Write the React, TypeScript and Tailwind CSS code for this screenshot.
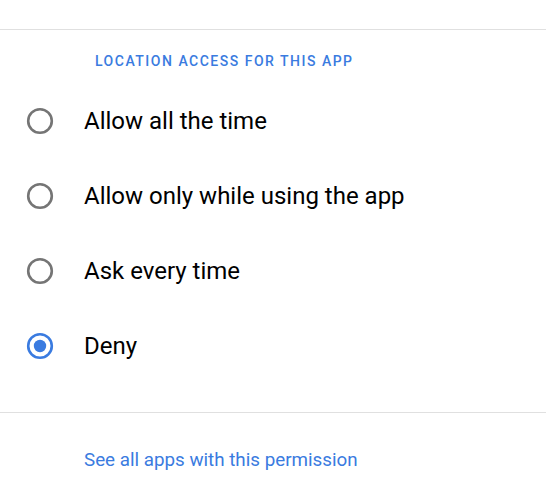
import React from "react";

const options = [
  { label: "Allow all the time", checked: false },
  { label: "Allow only while using the app", checked: false },
  { label: "Ask every time", checked: false },
  { label: "Deny", checked: true },
];

function Radio({ checked }: { checked: boolean }) {
  return (
    <svg width="30" height="30" viewBox="0 0 30 30" className="shrink-0">
      <circle
        cx="15"
        cy="15"
        r="11.8"
        fill="none"
        stroke={checked ? "#3a7be0" : "#757575"}
        strokeWidth="2.6"
      />
      {checked && <circle cx="15" cy="15" r="6.2" fill="#3a7be0" />}
    </svg>
  );
}

export default function App() {
  return (
    <div
      className="w-[546px] h-[486px] bg-white overflow-hidden"
      style={{ fontFamily: "Roboto, 'Liberation Sans', sans-serif" }}
    >
      <div className="h-[30px] border-b border-[#e0e0e0]" />
      <div className="pt-[21px] pl-[95px] h-[53px]">
        <div className="text-[14px] leading-[20px] font-medium tracking-[1.5px] text-[#3a7be0]">
          LOCATION ACCESS FOR THIS APP
        </div>
      </div>
      <div className="flex flex-col">
        {options.map((o) => (
          <div key={o.label} className="h-[75px] flex items-center pl-[25px]">
            <Radio checked={o.checked} />
            <span className="ml-[29px] text-[24px] leading-[26px] text-black">
              {o.label}
            </span>
          </div>
        ))}
      </div>
      <div className="h-[30px] border-b border-[#e0e0e0]" />
      <div className="pt-[35px] pl-[84px]">
        <span className="text-[18.8px] leading-[24px] text-[#3a7be0]">
          See all apps with this permission
        </span>
      </div>
    </div>
  );
}
